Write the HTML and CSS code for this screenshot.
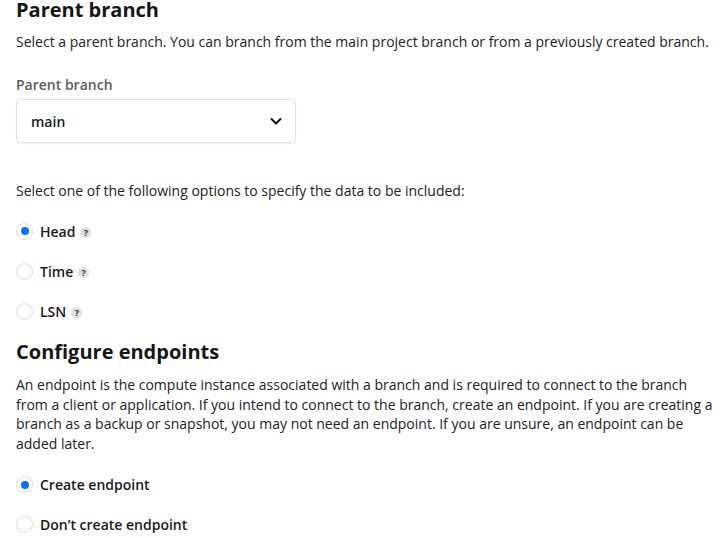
FILE: index.html
```html
<!DOCTYPE html>
<html>
<head>
<meta charset="utf-8">
<link rel="stylesheet" href="styles.css">
</head>
<body>
<div class="page">
  <section class="section">
    <h2 class="title">Parent branch</h2>
    <p class="desc">Select a parent branch. You can branch from the main project branch or from a previously created branch.</p>
    <div class="field">
      <label class="label">Parent branch</label>
      <div class="select">
        <span class="select-value">main</span>
        <svg class="chevron" width="14" height="14" viewBox="0 0 14 14"><path d="M2.5 5 L7 9.5 L11.5 5" fill="none" stroke="#111" stroke-width="2" stroke-linecap="round" stroke-linejoin="round"/></svg>
      </div>
    </div>
    <p class="desc options-intro">Select one of the following options to specify the data to be included:</p>
    <div class="radios">
      <div class="radio-row"><span class="radio checked"></span><span class="radio-label">Head</span><span class="help">?</span></div>
      <div class="radio-row"><span class="radio"></span><span class="radio-label">Time</span><span class="help">?</span></div>
      <div class="radio-row"><span class="radio"></span><span class="radio-label">LSN</span><span class="help">?</span></div>
    </div>
  </section>
  <section class="section">
    <h2 class="title">Configure endpoints</h2>
    <p class="desc para">An endpoint is the compute instance associated with a branch and is required to connect to the branch from a client or application. If you intend to connect to the branch, create an endpoint. If you are creating a branch as a backup or snapshot, you may not need an endpoint. If you are unsure, an endpoint can be added later.</p>
    <div class="radios endpoint-radios">
      <div class="radio-row"><span class="radio checked"></span><span class="radio-label">Create endpoint</span></div>
      <div class="radio-row"><span class="radio"></span><span class="radio-label">Don’t create endpoint</span></div>
    </div>
  </section>
</div>
</body>
</html>
```
FILE: styles.css
```css
* { box-sizing: border-box; }
html, body { margin: 0; padding: 0; background: #fff; }
body {
  font-family: "Open Sans", "Noto Sans", sans-serif;
  font-size: 14px;
  color: #1f1f1f;
  overflow: hidden;
}
.page {
  padding: 0 12px 0 16px;
  margin-top: -4px;
}
.title {
  margin: 0;
  font-size: 20px;
  font-weight: 700;
  line-height: 28px;
  color: #161616;
}
.desc {
  margin: 0;
  line-height: 20px;
  color: #222;
}
.section > .desc { margin-top: 8px; }
.field { margin-top: 23px; }
.label {
  display: block;
  font-weight: 600;
  color: #5c5c5c;
  line-height: 20px;
  margin-bottom: 4px;
}
.select {
  width: 280px;
  height: 44px;
  border: 1px solid #e3e3e3;
  border-radius: 4px;
  box-shadow: 0 1px 2px rgba(0,0,0,0.06);
  display: flex;
  align-items: center;
  justify-content: space-between;
  padding: 0 12px 0 14px;
}
.select-value { font-weight: 600; color: #1a1a1a; }
.chevron { display: block; }
.section > .options-intro { margin-top: 38px; }
.radios {
  display: flex;
  flex-direction: column;
  gap: 20px;
  margin-top: 20px;
}
.radio-row {
  display: flex;
  align-items: center;
  height: 20px;
}
.radio {
  width: 17px;
  height: 17px;
  border-radius: 50%;
  border: 1px solid #dcdcdc;
  background: #fff;
  margin-right: 7px;
  position: relative;
  flex: none;
}
.radio.checked::after {
  content: "";
  position: absolute;
  left: 3.5px;
  top: 3.5px;
  width: 8px;
  height: 8px;
  border-radius: 50%;
  background: #0b72f0;
}
.radio-label { font-weight: 600; color: #1a1a1a; }
.help {
  width: 11px;
  height: 11px;
  border-radius: 50%;
  background: #e0e0e4;
  color: #333;
  font-size: 9px;
  font-weight: 700;
  line-height: 11px;
  text-align: center;
  margin-left: 5px;
  margin-top: 2px;
}
.section + .section { margin-top: 17px; }
.section > .para { margin-top: 9px; line-height: 19.7px; }
.endpoint-radios { margin-top: 21px; }
```
